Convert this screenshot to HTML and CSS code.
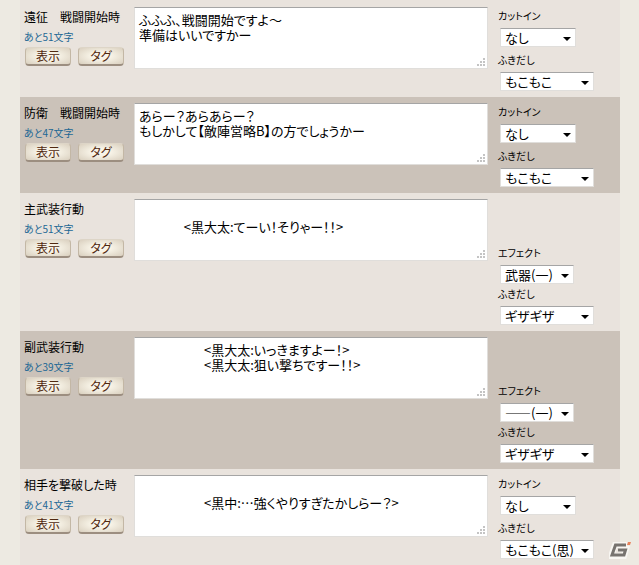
FILE: index.html
```html
<!DOCTYPE html>
<html lang="ja">
<head>
    <meta charset="UTF-8">
    <meta name="viewport" content="width=device-width, initial-scale=1.0">
    <title>セリフ設定</title>
    <link rel="stylesheet" href="styles.css">
</head>
<body>
    <svg class="defs" aria-hidden="true">
        <symbol id="grip" viewBox="0 0 8 8">
            <path d="M6 0h2v2h-2zM3 3h2v2h-2zM6 3h2v2h-2zM0 6h2v2h-2zM3 6h2v2h-2zM6 6h2v2h-2z"/>
        </symbol>
    </svg>

    <form class="serif-list">
        <div class="row">
            <div class="info">
                <label class="title" for="text1">遠征　戦闘開始時</label>
                <div class="count">あと51文字</div>
                <div class="buttons">
                    <button type="button">表示</button>
                    <button type="button">タグ</button>
                </div>
            </div>
            <div class="text">
                <textarea id="text1">ふふふ、戦闘開始ですよ～
準備はいいですかー</textarea>
                <svg class="grip"><use href="#grip"/></svg>
            </div>
            <div class="options">
                <div class="field">
                    <label for="cutin1">カットイン</label>
                    <div class="select cutin"><select id="cutin1"><option>なし</option></select></div>
                </div>
                <div class="field">
                    <label for="balloon1">ふきだし</label>
                    <div class="select"><select id="balloon1"><option>もこもこ</option></select></div>
                </div>
            </div>
        </div>

        <div class="row">
            <div class="info">
                <label class="title" for="text2">防衛　戦闘開始時</label>
                <div class="count">あと47文字</div>
                <div class="buttons">
                    <button type="button">表示</button>
                    <button type="button">タグ</button>
                </div>
            </div>
            <div class="text">
                <textarea id="text2">あらー？あらあらー？
もしかして【敵陣営略B】の方でしょうかー</textarea>
                <svg class="grip"><use href="#grip"/></svg>
            </div>
            <div class="options">
                <div class="field">
                    <label for="cutin2">カットイン</label>
                    <div class="select cutin"><select id="cutin2"><option>なし</option></select></div>
                </div>
                <div class="field">
                    <label for="balloon2">ふきだし</label>
                    <div class="select"><select id="balloon2"><option>もこもこ</option></select></div>
                </div>
            </div>
        </div>

        <div class="row">
            <div class="info">
                <label class="title" for="text3">主武装行動</label>
                <div class="count">あと51文字</div>
                <div class="buttons">
                    <button type="button">表示</button>
                    <button type="button">タグ</button>
                </div>
            </div>
            <div class="text">
                <textarea id="text3">　
　　　  &lt;黒大太:てーい！そりゃー！！&gt;</textarea>
                <svg class="grip"><use href="#grip"/></svg>
            </div>
            <div class="options action">
                <div class="field">
                    <label for="effect3">エフェクト</label>
                    <div class="select effect"><select id="effect3"><option>武器(一)</option></select></div>
                </div>
                <div class="field">
                    <label for="balloon3">ふきだし</label>
                    <div class="select"><select id="balloon3"><option>ギザギザ</option></select></div>
                </div>
            </div>
        </div>

        <div class="row">
            <div class="info">
                <label class="title" for="text4">副武装行動</label>
                <div class="count">あと39文字</div>
                <div class="buttons">
                    <button type="button">表示</button>
                    <button type="button">タグ</button>
                </div>
            </div>
            <div class="text">
                <textarea id="text4">　　　　　&lt;黒大太:いっきますよー！&gt;
　　　　　&lt;黒大太:狙い撃ちですー！！&gt;</textarea>
                <svg class="grip"><use href="#grip"/></svg>
            </div>
            <div class="options action">
                <div class="field">
                    <label for="effect4">エフェクト</label>
                    <div class="select effect"><select id="effect4"><option>――(一)</option></select></div>
                </div>
                <div class="field">
                    <label for="balloon4">ふきだし</label>
                    <div class="select"><select id="balloon4"><option>ギザギザ</option></select></div>
                </div>
            </div>
        </div>

        <div class="row">
            <div class="info">
                <label class="title" for="text5">相手を撃破した時</label>
                <div class="count">あと41文字</div>
                <div class="buttons">
                    <button type="button">表示</button>
                    <button type="button">タグ</button>
                </div>
            </div>
            <div class="text">
                <textarea id="text5">　
　　　　　&lt;黒中:…強くやりすぎたかしらー？&gt;</textarea>
                <svg class="grip"><use href="#grip"/></svg>
            </div>
            <div class="options">
                <div class="field">
                    <label for="cutin5">カットイン</label>
                    <div class="select cutin"><select id="cutin5"><option>なし</option></select></div>
                </div>
                <div class="field">
                    <label for="balloon5">ふきだし</label>
                    <div class="select"><select id="balloon5"><option>もこもこ(思)</option></select></div>
                </div>
            </div>
        </div>
    </form>

    <svg class="logo" viewBox="0 0 24 18" aria-hidden="true">
        <path class="logo-edge" d="M18 4H6L2 15H15L17 8H9"/>
        <path class="logo-mark" d="M17 4H6.500L3 14H15L16.500 9H9"/>
        <path class="logo-dot" d="M18 4L19 1H22L21 4Z"/>
    </svg>
</body>
</html>
```
FILE: styles.css
```css
* {
    box-sizing: border-box;
}

body {
    margin: 0;
    padding: 0 19px 0 20px;
    background-color: #edeae2;
    color: #000;
    font-family: "Noto Sans CJK JP", sans-serif;
    font-size: 12px;
    font-feature-settings: "palt";
}

button,
select,
textarea {
    font-family: inherit;
    font-feature-settings: inherit;
    color: inherit;
}

.defs {
    display: none;
}

.serif-list {
    border-top: 1px solid #e9e3dd;
}

.row {
    display: grid;
    grid-template-columns: 110px 1fr 132px;
    padding: 0 0 6px 4px;
    background-color: #e9e3dd;
}

.row:nth-child(even) {
    background-color: #cbc2b9;
}

/* 左: タイトルとボタン */
.info {
    padding-top: 7px;
}

.title {
    display: block;
    line-height: 18px;
}

.count {
    margin-top: 4px;
    font-size: 10px;
    line-height: 14px;
    color: #1c6794;
}

.buttons {
    display: flex;
    gap: 7px;
    margin-top: 3px;
    padding-left: 1px;
}

.buttons button {
    width: 46px;
    height: 19px;
    padding: 0;
    border: 1px solid #c3b7a5;
    border-bottom: 2px solid #9c8e80;
    border-top-color: #ddd5c7;
    border-radius: 4px;
    background: radial-gradient(ellipse, #f8f4e8 30%, #d9cfbe 100%);
    color: #50280f;
    font-size: 12px;
    line-height: 14px;
    cursor: pointer;
}

/* 中央: セリフ入力 */
.text {
    position: relative;
    height: 62px;
    margin-top: 6px;
}

.text textarea {
    display: block;
    width: 100%;
    height: 100%;
    padding: 4px;
    border: 1px solid #e0dedb;
    border-top-color: #a5a5a5;
    background-color: #fff;
    font-size: 13px;
    line-height: 15px;
    resize: none;
    overflow: hidden;
}

.grip {
    position: absolute;
    right: 3px;
    bottom: 3px;
    width: 8px;
    height: 8px;
    fill: #c4c4c4;
    pointer-events: none;
}

/* 右: 演出の選択 */
.options {
    display: flex;
    flex-direction: column;
    gap: 5px;
    padding: 7px 0 0 10px;
}

.options.action {
    gap: 2px;
    padding-top: 52px;
}

.field label {
    display: block;
    margin-bottom: 4px;
    font-size: 10px;
    line-height: 16px;
}

.select {
    position: relative;
    width: 94px;
    margin-left: 2px;
}

.select.cutin {
    width: 76px;
}

.select.effect {
    width: 74px;
}

.select select {
    display: block;
    width: 100%;
    height: 19px;
    padding: 0 0 0 4px;
    border: 1px solid #e0dedb;
    border-top-color: #a5a5a5;
    border-radius: 0;
    background-color: #fff;
    font-size: 13px;
    line-height: 17px;
    appearance: none;
}

.select::after {
    content: "";
    position: absolute;
    right: 5px;
    top: 9px;
    border: 4px solid transparent;
    border-top-color: #000;
    border-bottom: 0;
    pointer-events: none;
}

.logo {
    position: fixed;
    right: 6px;
    bottom: 6px;
    width: 24px;
    height: 18px;
    fill: none;
}

.logo-edge {
    stroke: #f8f6f2;
    stroke-width: 6;
}

.logo-mark {
    stroke: #77736f;
    stroke-width: 3;
}

.logo-dot {
    fill: #e8835c;
}
```
